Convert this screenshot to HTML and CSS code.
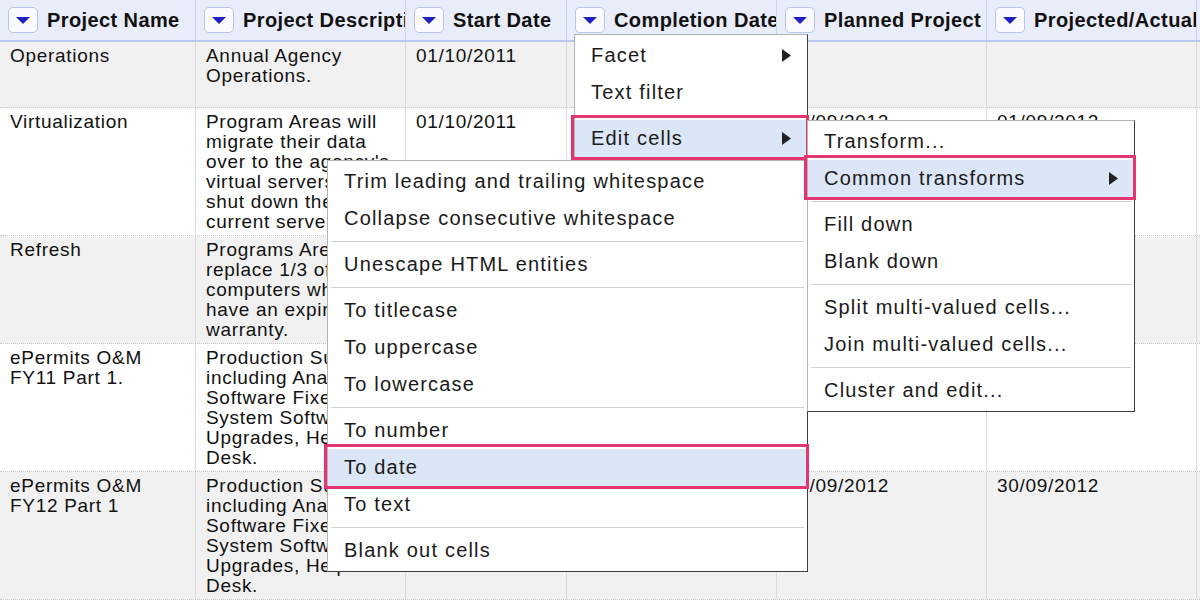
FILE: index.html
```html
<!DOCTYPE html>
<html lang="en">
<head>
<meta charset="utf-8">
<title>Project data – column menu</title>
<link rel="stylesheet" href="styles.css">
</head>
<body>
<div class="page">
  <div class="grid">
    <div class="row head">
      <div class="hcell"><span class="drop"><svg viewBox="0 0 14 7" width="14" height="7"><path d="M0 0H14L7 7Z"/></svg></span><span class="htext">Project Name</span></div>
      <div class="hcell"><span class="drop"><svg viewBox="0 0 14 7" width="14" height="7"><path d="M0 0H14L7 7Z"/></svg></span><span class="htext">Project Description</span></div>
      <div class="hcell"><span class="drop"><svg viewBox="0 0 14 7" width="14" height="7"><path d="M0 0H14L7 7Z"/></svg></span><span class="htext">Start Date</span></div>
      <div class="hcell"><span class="drop"><svg viewBox="0 0 14 7" width="14" height="7"><path d="M0 0H14L7 7Z"/></svg></span><span class="htext">Completion Date</span></div>
      <div class="hcell"><span class="drop"><svg viewBox="0 0 14 7" width="14" height="7"><path d="M0 0H14L7 7Z"/></svg></span><span class="htext">Planned Project Completion</span></div>
      <div class="hcell"><span class="drop"><svg viewBox="0 0 14 7" width="14" height="7"><path d="M0 0H14L7 7Z"/></svg></span><span class="htext">Projected/Actual Completion</span></div>
    </div>

    <div class="row shade first">
      <div class="cell">Operations</div>
      <div class="cell">Annual Agency Operations.</div>
      <div class="cell">01/10/2011</div>
      <div class="cell">30/09/2012</div>
      <div class="cell"></div>
      <div class="cell"></div>
    </div>

    <div class="row">
      <div class="cell">Virtualization</div>
      <div class="cell">Program Areas will migrate their data over to the agency's virtual servers and shut down their current servers.</div>
      <div class="cell">01/10/2011</div>
      <div class="cell">30/09/2012</div>
      <div class="cell">30/09/2012</div>
      <div class="cell">01/09/2012</div>
    </div>

    <div class="row shade">
      <div class="cell">Refresh</div>
      <div class="cell">Programs Areas will replace 1/3 of their computers which have an expired warranty.</div>
      <div class="cell">01/10/2011</div>
      <div class="cell">30/09/2012</div>
      <div class="cell">30/09/2012</div>
      <div class="cell">30/09/2012</div>
    </div>

    <div class="row">
      <div class="cell">ePermits O&amp;M FY11 Part 1.</div>
      <div class="cell">Production Support including Analysis, Software Fixes, System Software Upgrades, Help Desk.</div>
      <div class="cell">01/10/2010</div>
      <div class="cell">30/09/2011</div>
      <div class="cell"></div>
      <div class="cell"></div>
    </div>

    <div class="row shade">
      <div class="cell">ePermits O&amp;M FY12 Part 1</div>
      <div class="cell">Production Support including Analysis, Software Fixes, System Software Upgrades, Help Desk.</div>
      <div class="cell">01/10/2011</div>
      <div class="cell">30/09/2012</div>
      <div class="cell">30/09/2012</div>
      <div class="cell">30/09/2012</div>
    </div>
  </div>

  <div class="menu m-col">
    <div class="item">Facet<svg class="arrow" viewBox="0 0 9 13" width="9" height="13"><path d="M0 0L9 6.5L0 13Z"/></svg></div>
    <div class="item">Text filter</div>
    <div class="sep"></div>
    <div class="item hl">Edit cells<svg class="arrow" viewBox="0 0 9 13" width="9" height="13"><path d="M0 0L9 6.5L0 13Z"/></svg></div>
    <div class="item">Edit column<svg class="arrow" viewBox="0 0 9 13" width="9" height="13"><path d="M0 0L9 6.5L0 13Z"/></svg></div>
    <div class="item">Transpose<svg class="arrow" viewBox="0 0 9 13" width="9" height="13"><path d="M0 0L9 6.5L0 13Z"/></svg></div>
    <div class="sep"></div>
    <div class="item">Sort...</div>
    <div class="item">View<svg class="arrow" viewBox="0 0 9 13" width="9" height="13"><path d="M0 0L9 6.5L0 13Z"/></svg></div>
    <div class="sep"></div>
    <div class="item">Reconcile<svg class="arrow" viewBox="0 0 9 13" width="9" height="13"><path d="M0 0L9 6.5L0 13Z"/></svg></div>
  </div>

  <div class="menu m-trans">
    <div class="item">Trim leading and trailing whitespace</div>
    <div class="item">Collapse consecutive whitespace</div>
    <div class="sep"></div>
    <div class="item">Unescape HTML entities</div>
    <div class="sep"></div>
    <div class="item">To titlecase</div>
    <div class="item">To uppercase</div>
    <div class="item">To lowercase</div>
    <div class="sep"></div>
    <div class="item">To number</div>
    <div class="item hl">To date</div>
    <div class="item">To text</div>
    <div class="sep"></div>
    <div class="item">Blank out cells</div>
  </div>

  <div class="menu m-edit">
    <div class="item">Transform...</div>
    <div class="item hl">Common transforms<svg class="arrow" viewBox="0 0 9 13" width="9" height="13"><path d="M0 0L9 6.5L0 13Z"/></svg></div>
    <div class="sep"></div>
    <div class="item">Fill down</div>
    <div class="item">Blank down</div>
    <div class="sep"></div>
    <div class="item">Split multi-valued cells...</div>
    <div class="item">Join multi-valued cells...</div>
    <div class="sep"></div>
    <div class="item">Cluster and edit...</div>
  </div>
</div>
</body>
</html>
```

FILE: styles.css
```css
* { box-sizing: border-box; }

html, body {
  margin: 0;
  padding: 0;
  background: #ffffff;
}

body {
  font-family: "Liberation Sans", Arial, Helvetica, sans-serif;
  color: #111;
  width: 1200px;
  height: 600px;
  overflow: hidden;
}

.page {
  position: relative;
  width: 1200px;
  height: 600px;
  overflow: hidden;
}

.grid {
  display: flex;
  flex-direction: column;
}

.row {
  display: grid;
  grid-template-columns: 196px 210px 161px 210px 210px 210px;
  border-bottom: 1px dotted #c9c9c9;
}

.row.shade { background: #f1f1f1; }
.row.first { min-height: 66px; }

.row.head {
  height: 42px;
  background: #e9ecf9;
  border-bottom: 2px solid #b7c9ef;
}

.hcell {
  display: flex;
  align-items: center;
  gap: 9px;
  padding-left: 8px;
  border-right: 1px solid #c6d3f2;
  overflow: hidden;
  white-space: nowrap;
}

.drop {
  flex: none;
  width: 30px;
  height: 26px;
  border: 1px solid #b9c4ea;
  border-radius: 5px;
  background: #fbfbff;
  display: flex;
  align-items: center;
  justify-content: center;
}

.drop svg { fill: #1f1fc4; display: block; }

.htext {
  font-weight: bold;
  font-size: 20px;
  letter-spacing: 0.4px;
  color: #111;
}

.cell {
  padding: 4px 10px 3px;
  font-size: 19px;
  line-height: 20px;
  letter-spacing: 0.7px;
  border-right: 1px solid #dcdcdc;
  overflow: hidden;
}

/* menus */
.menu {
  position: absolute;
  background: #ffffff;
  border: 1px solid #b4b4b4;
  border-right-color: #3c3c3c;
  border-bottom-color: #3c3c3c;
  padding: 2px 0;
  font-size: 20px;
  letter-spacing: 1.2px;
  color: #1a1a1a;
}

.m-col { left: 574px; top: 34px; width: 234px; z-index: 1; }
.m-trans { left: 327px; top: 160px; width: 481px; z-index: 2; }
.m-edit { left: 807px; top: 120px; width: 328px; z-index: 3; }

.item {
  position: relative;
  height: 37px;
  padding: 0 16px;
  display: flex;
  align-items: center;
  justify-content: space-between;
  white-space: nowrap;
}

.item .arrow { fill: #222; flex: none; }

.item.hl { background: #dbe6f6; }

.item.hl::after {
  content: "";
  position: absolute;
  top: -5px;
  bottom: -3px;
  left: -4px;
  right: -2px;
  border: 3px solid #e3356f;
  pointer-events: none;
}

.sep {
  height: 1px;
  margin: 4px 3px;
  background: #cfcfcf;
}
```
